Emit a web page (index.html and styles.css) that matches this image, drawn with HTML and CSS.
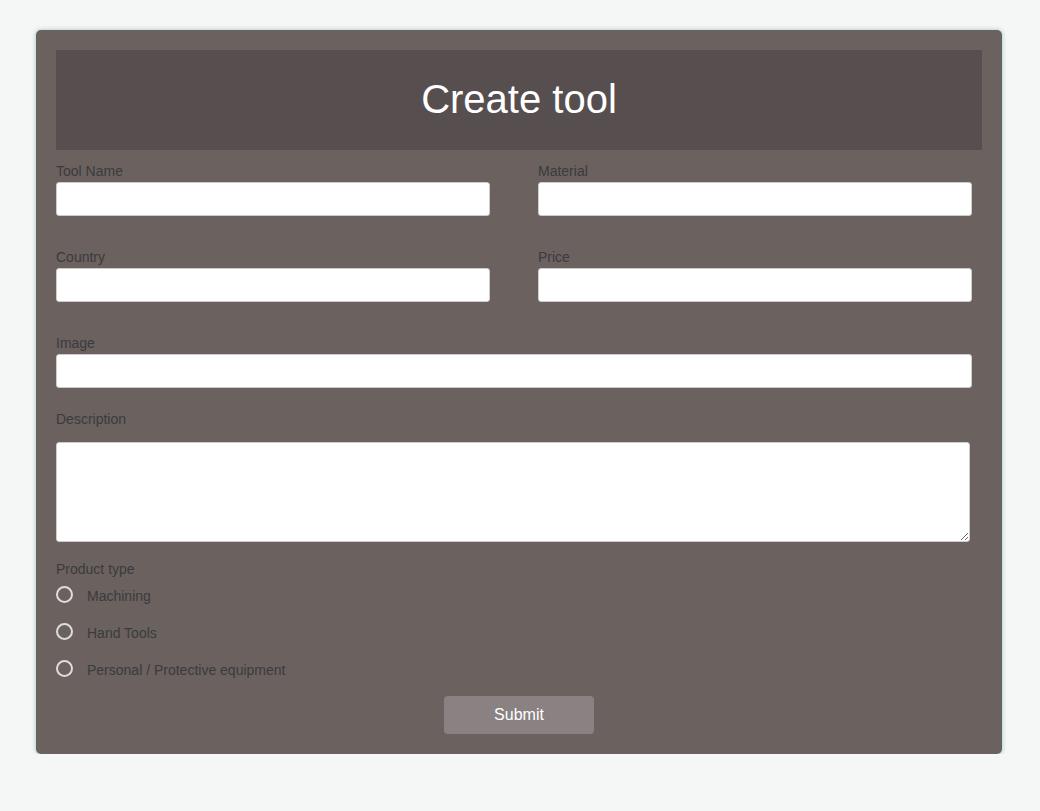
FILE: index.html
```html
<!DOCTYPE html>
<html>
<head>
<meta charset="utf-8">
<link rel="stylesheet" href="styles.css">
</head>
<body>
<div class="card">
  <div class="header"><h1>Create tool</h1></div>
  <form class="form">
    <div class="grid">
      <div class="field"><label>Tool Name</label><input type="text"></div>
      <div class="field"><label>Material</label><input type="text"></div>
      <div class="field"><label>Country</label><input type="text"></div>
      <div class="field"><label>Price</label><input type="text"></div>
    </div>
    <div class="field wide"><label>Image</label><input type="text"></div>
    <div class="field desc"><label>Description</label><textarea></textarea></div>
    <div class="types">
      <div class="types-label">Product type</div>
      <label class="radio"><input type="radio" name="t"><span>Machining</span></label>
      <label class="radio"><input type="radio" name="t"><span>Hand Tools</span></label>
      <label class="radio"><input type="radio" name="t"><span>Personal / Protective equipment</span></label>
    </div>
    <div class="actions"><button type="button" class="submit">Submit</button></div>
  </form>
</div>
</body>
</html>
```
FILE: styles.css
```css
html, body { margin: 0; padding: 0; }
body {
  background: #f4f7f6;
  font-family: "Liberation Sans", Arial, sans-serif;
  padding: 30px 38px 0 36px;
}
.card {
  width: 926px;
  background: #6b615f;
  border-radius: 5px;
  padding: 20px;
  box-shadow: 0 0 4px rgba(110, 175, 175, 0.7);
}
.header {
  background: #574f4f;
  height: 100px;
  display: flex;
  align-items: center;
  justify-content: center;
}
.header h1 {
  margin: 0 0 2px;
  color: #fff;
  font-weight: normal;
  font-size: 40px;
  line-height: 46px;
}
.form { display: flex; flex-direction: column; }
.grid {
  display: grid;
  grid-template-columns: 434px 434px;
  column-gap: 48px;
  row-gap: 33px;
  margin-top: 13px;
}
.field { display: flex; flex-direction: column; }
.field label, .types-label {
  font-size: 14px;
  line-height: 16px;
  color: #3a3b3d;
  margin-bottom: 3px;
}
.field input {
  box-sizing: border-box;
  height: 34px;
  width: 100%;
  border: 1px solid #ccc;
  border-radius: 3px;
  background: #fff;
  margin: 0;
  padding: 6px 8px;
  font-size: 14px;
}
.wide { margin-top: 33px; width: 916px; }
.desc { margin-top: 23px; }
.desc label { margin-bottom: 15px; }
.desc textarea {
  box-sizing: border-box;
  width: 914px;
  height: 100px;
  border: 1px solid #ccc;
  border-radius: 3px;
  margin: 0;
  display: block;
}
.types { margin-top: 19px; display: flex; flex-direction: column; }
.types-label { margin-bottom: 0; }
.radio {
  display: flex;
  align-items: center;
  height: 37px;
  font-size: 14px;
  color: #3a3b3d;
}
.radio input {
  appearance: none;
  -webkit-appearance: none;
  width: 17px;
  height: 17px;
  border: 2px solid #ddd;
  border-radius: 50%;
  margin: -2px 14px 0 0;
  box-sizing: border-box;
  background: transparent;
}
.radio span { line-height: 16px; }
.actions { display: flex; justify-content: center; margin-top: 8px; }
.submit {
  width: 150px;
  height: 38px;
  background: #8a8282;
  color: #fff;
  border: none;
  border-radius: 4px;
  font-family: "Liberation Sans", Arial, sans-serif;
  font-size: 16px;
}
```
